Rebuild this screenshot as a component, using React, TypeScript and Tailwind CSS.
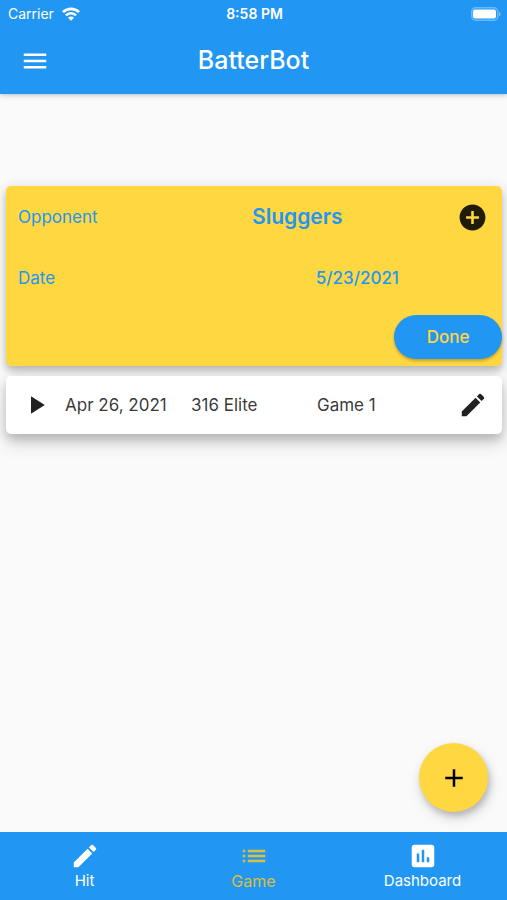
import { MdAdd, MdAddCircle, MdAssessment, MdEdit, MdList, MdMenu, MdPlayArrow } from 'react-icons/md';

const games = [{ date: 'Apr 26, 2021', opponent: '316 Elite', name: 'Game 1' }];

const tabs = [
  { label: 'Hit', href: '#hit', icon: MdEdit, active: false },
  { label: 'Game', href: '#game', icon: MdList, active: true },
  { label: 'Dashboard', href: '#dashboard', icon: MdAssessment, active: false },
];

function WifiIcon() {
  return (
    <svg width="18" height="14" viewBox="0 0 18 14" fill="none" stroke="currentColor" strokeWidth="2.6" aria-hidden="true">
      <path d="M0.9 5.2a11.5 11.5 0 0 1 16.2 0" />
      <path d="M3.9 8.3a7.2 7.2 0 0 1 10.2 0" />
      <path d="M9 13.8 6 10.8a4.2 4.2 0 0 1 6 0z" fill="currentColor" stroke="none" />
    </svg>
  );
}

function BatteryIcon() {
  return (
    <svg width="30" height="14" viewBox="0 0 30 14" aria-hidden="true">
      <rect x="0.75" y="0.75" width="26" height="12.5" rx="4" fill="none" stroke="#fff" strokeOpacity="0.35" strokeWidth="1.5" />
      <rect x="2" y="2.5" width="23" height="9" rx="2" fill="#fff" />
      <path d="M28 5v4c1-.3 1.6-1 1.6-2S29 5.3 28 5z" fill="#fff" fillOpacity="0.4" />
    </svg>
  );
}

function StatusBar() {
  return (
    <div className="grid h-7 grid-cols-3 items-center pl-2 pr-1.5 text-sm leading-4">
      <div className="flex items-center gap-2">
        <span>Carrier</span>
        <WifiIcon />
      </div>
      <span className="text-center font-semibold">8:58 PM</span>
      <div className="flex justify-end">
        <BatteryIcon />
      </div>
    </div>
  );
}

function NewGameCard() {
  return (
    <section className="rounded-[5px] bg-[#ffd740] pb-[7px] text-[17px] leading-6 text-[#2196f3] shadow-[0_5px_6px_rgba(0,0,0,0.16),0_3px_14px_rgba(0,0,0,0.16)]">
      <div className="grid h-[62px] grid-cols-[1fr_2fr_59px] items-center">
        <span className="pl-3">Opponent</span>
        <span className="text-center text-[21px] font-semibold">Sluggers</span>
        <button type="button" aria-label="Add opponent" className="flex justify-center text-black/87">
          <MdAddCircle size={31} />
        </button>
      </div>
      <div className="grid h-15 grid-cols-[5fr_7fr] items-center">
        <span className="pl-3">Date</span>
        <span className="text-center font-medium">5/23/2021</span>
      </div>
      <div className="flex justify-end pt-[7px]">
        <button
          type="button"
          className="h-11 w-27 rounded-full bg-[#2196f3] font-medium text-[#ffd740] shadow-[0_2px_3px_rgba(0,0,0,0.25)]"
        >
          Done
        </button>
      </div>
    </section>
  );
}

export default function App() {
  return (
    <div className="flex min-h-screen flex-col bg-[#fafafa] font-['Inter','Liberation_Sans',sans-serif]">
      <header className="relative bg-[#2196f3] text-white shadow-[0_1px_5px_rgba(0,0,0,0.25)]">
        <StatusBar />
        <div className="grid h-[66px] grid-cols-[70px_1fr_70px] items-center">
          <button type="button" aria-label="Open menu" className="flex justify-center">
            <MdMenu size={30} />
          </button>
          <h1 className="text-center text-[25px] font-medium">BatterBot</h1>
        </div>
      </header>

      <main className="relative flex flex-1 flex-col gap-2.5 pl-1.5 pr-[5px] pt-[92px]">
        <NewGameCard />
        {games.map((game) => (
          <article
            key={game.name}
            className="flex h-[58px] items-center rounded-[5px] bg-white text-[17px] leading-6 text-black/80 shadow-[0_6px_10px_rgba(0,0,0,0.16),0_8px_20px_rgba(0,0,0,0.16)]"
          >
            <button type="button" aria-label="Play game" className="flex w-[59px] justify-center text-black/87">
              <MdPlayArrow size={30} />
            </button>
            <span className="flex-1">{game.date}</span>
            <span className="flex-1">{game.opponent}</span>
            <span className="flex-1">{game.name}</span>
            <button type="button" aria-label="Edit game" className="flex w-[59px] justify-center text-black/87">
              <MdEdit size={30} />
            </button>
          </article>
        ))}
        <button
          type="button"
          aria-label="New game"
          className="absolute bottom-5 right-[19px] flex size-[69px] items-center justify-center rounded-full bg-[#ffd740] text-black shadow-[2px_4px_6px_rgba(0,0,0,0.18),2px_6px_14px_rgba(0,0,0,0.14)]"
        >
          <MdAdd size={30} />
        </button>
      </main>

      <nav className="grid h-[68px] grid-cols-3 bg-[#2196f3]">
        {tabs.map(({ label, href, icon: Icon, active }) => (
          <a
            key={label}
            href={href}
            aria-current={active ? 'page' : undefined}
            className={`flex flex-col items-center pt-[9px] ${active ? 'text-base text-[#d9c040]' : 'text-[15px] text-white'}`}
          >
            <Icon size={30} />
            <span className="leading-5">{label}</span>
          </a>
        ))}
      </nav>
    </div>
  );
}
